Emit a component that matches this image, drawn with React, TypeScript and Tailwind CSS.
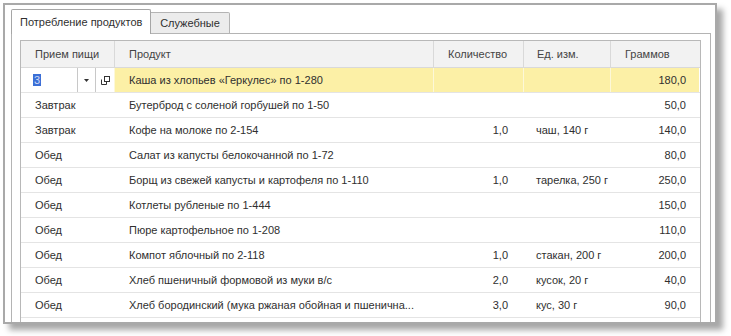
import React from "react";

type Row = { meal: string; product: string; qty: string; unit: string; grams: string };

const rows: Row[] = [
  { meal: "Завтрак", product: "Бутерброд с соленой горбушей по 1-50", qty: "", unit: "", grams: "50,0" },
  { meal: "Завтрак", product: "Кофе на молоке по 2-154", qty: "1,0", unit: "чаш, 140 г", grams: "140,0" },
  { meal: "Обед", product: "Салат из капусты белокочанной по 1-72", qty: "", unit: "", grams: "80,0" },
  { meal: "Обед", product: "Борщ из свежей капусты и картофеля по 1-110", qty: "1,0", unit: "тарелка, 250 г", grams: "250,0" },
  { meal: "Обед", product: "Котлеты рубленые по 1-444", qty: "", unit: "", grams: "150,0" },
  { meal: "Обед", product: "Пюре картофельное по 1-208", qty: "", unit: "", grams: "110,0" },
  { meal: "Обед", product: "Компот яблочный по 2-118", qty: "1,0", unit: "стакан, 200 г", grams: "200,0" },
  { meal: "Обед", product: "Хлеб пшеничный формовой из муки в/с", qty: "2,0", unit: "кусок, 20 г", grams: "40,0" },
  { meal: "Обед", product: "Хлеб бородинский (мука ржаная обойная и пшенична...", qty: "3,0", unit: "кус, 30 г", grams: "90,0" },
];

const cols = "grid grid-cols-[93px_319px_90px_87px_89px]";

export default function App() {
  return (
    <div className="w-[731px] h-[336px] bg-white overflow-hidden font-['Liberation_Sans',Arial,sans-serif] text-[11px] text-[#2f2f2f]">
      <div className="ml-[3px] mt-[3px] w-[714px] h-[321px] border-2 border-[#a9a9a9] bg-white shadow-[6px_6px_6px_rgba(0,0,0,0.35)] overflow-hidden flex flex-col pl-[6px] pt-[4px]">
        {/* Tabs */}
        <div className="flex items-end h-[25px] relative z-10">
          <div className="w-[140px] h-[25px] border border-b-0 border-[#a6a6a6] rounded-t-[2px] bg-white flex items-center pl-[8px]">
            Потребление продуктов
          </div>
          <div className="w-[79px] h-[22px] border border-l-0 border-[#b4b4b4] rounded-tr-[2px] bg-[#ececec] flex items-center justify-center">
            Служебные
          </div>
        </div>

        {/* Panel */}
        <div className="w-[700px] flex-1 -mt-px border border-[#b4b4b4] pl-[8px] pt-[6px]">
          <div className="w-[681px] h-[300px] border border-[#b8b8b8] overflow-hidden">
            {/* Header */}
            <div className={`${cols} h-[27px] bg-[#f2f2f2] border-b border-[#d9d9d9] text-[#444]`}>
              <div className="flex items-center pl-[14px]">Прием пищи</div>
              <div className="flex items-center pl-[14px] border-l border-[#d9d9d9]">Продукт</div>
              <div className="flex items-center pl-[14px] border-l border-[#d9d9d9]">Количество</div>
              <div className="flex items-center pl-[13px] border-l border-[#d9d9d9]">Ед. изм.</div>
              <div className="flex items-center pl-[14px] border-l border-[#d9d9d9]">Граммов</div>
            </div>

            {/* Active row with editor */}
            <div className={`${cols} h-[25px] border-b border-[#e4e4e4]`}>
              <div className="flex items-stretch bg-white">
                <div className="w-[56px] flex items-center pl-[12px]">
                  <span className="bg-[#3b6fd6] text-[#cfd8f5] leading-[12px] px-px">3</span>
                </div>
                <div className="w-[18px] border-l border-[#c8c8c8] flex items-center justify-center">
                  <svg width="5" height="3" viewBox="0 0 5 3">
                    <path d="M0 0h5L2.5 3z" fill="#333" />
                  </svg>
                </div>
                <div className="w-[19px] border-l border-[#c8c8c8] flex items-center justify-center">
                  <svg width="9" height="9" viewBox="0 0 9 9" fill="none" stroke="#333" strokeWidth="1">
                    <rect x="3.5" y="0.5" width="5" height="5" />
                    <path d="M0.5 3.5v5h5v-3" />
                  </svg>
                </div>
              </div>
              <div className="flex items-center pl-[14px] bg-[#fcf0a6] border-l border-[#fdf8d8]">
                Каша из хлопьев «Геркулес» по 1-280
              </div>
              <div className="bg-[#fcf0a6] border-l border-[#fdf8d8]" />
              <div className="bg-[#fcf0a6] border-l border-[#fdf8d8]" />
              <div className="flex items-center justify-end pr-[13px] bg-[#fcf0a6] border-l border-[#fdf8d8]">180,0</div>
            </div>

            {rows.map((r, i) => (
              <div key={i} className={`${cols} h-[25px] border-b border-[#e4e4e4]`}>
                <div className="flex items-center pl-[14px]">{r.meal}</div>
                <div className="flex items-center pl-[15px] whitespace-nowrap overflow-hidden">{r.product}</div>
                <div className="flex items-center justify-end pr-[15px]">{r.qty}</div>
                <div className="flex items-center pl-[13px]">{r.unit}</div>
                <div className="flex items-center justify-end pr-[13px]">{r.grams}</div>
              </div>
            ))}
          </div>
        </div>
      </div>
    </div>
  );
}
